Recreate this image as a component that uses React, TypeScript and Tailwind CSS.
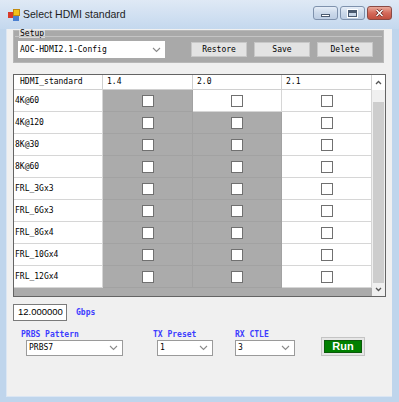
import React from 'react'

const rows = ['4K@60', '4K@120', '8K@30', '8K@60', 'FRL_3Gx3', 'FRL_6Gx3', 'FRL_8Gx4', 'FRL_10Gx4', 'FRL_12Gx4']

// which cells are editable (white) per column
const enabled14 = [false, false, false, false, false, false, false, false, false]
const enabled20 = [true, false, false, false, false, false, false, false, false]
const enabled21 = [true, true, true, true, true, true, true, true, true]

function Chevron() {
  return (
    <svg width="9" height="6" viewBox="0 0 9 6">
      <polyline points="1,1 4.5,4.5 8,1" fill="none" stroke="#8a8a8a" strokeWidth="1.1" />
    </svg>
  )
}

function Check() {
  return <div className="w-[12px] h-[12px] border border-[#707070] bg-white" />
}

function Cell({ on }: { on: boolean }) {
  return (
    <div
      className={
        on
          ? 'h-[22px] flex items-center justify-center bg-white border-r border-b border-[#d6d6d6]'
          : 'h-[22px] flex items-center justify-center bg-[#ababab] border-r border-b border-[#a2a2a2]'
      }
    >
      <Check />
    </div>
  )
}

function Combo({ text, w, bordered = true }: { text: string; w: string; bordered?: boolean }) {
  return (
    <div
      className={
        'h-[16px] bg-white flex items-center justify-between pl-[2px] pr-[4px] ' +
        w +
        (bordered ? ' border border-[#9a9a9a]' : '')
      }
    >
      <span className="text-[8px] leading-none text-black">{text}</span>
      <Chevron />
    </div>
  )
}

function Btn({ label }: { label: string }) {
  return (
    <div className="w-[56px] h-[15px] bg-[#e3e3e3] border border-[#c8c8c8] flex items-center justify-center text-[8px] text-black">
      {label}
    </div>
  )
}

function CaptionBtn({ kind }: { kind: 'min' | 'max' | 'close' }) {
  if (kind === 'close') {
    return (
      <div className="w-[25px] h-[14px] rounded-[3px] border border-[#8a4a44] bg-gradient-to-b from-[#e9a99b] via-[#d46a5a] to-[#c2503f] flex items-center justify-center">
        <svg width="9" height="8" viewBox="0 0 9 8">
          <path d="M1.5 1 L7.5 7 M7.5 1 L1.5 7" stroke="#5a1c16" strokeWidth="2.6" />
          <path d="M1.5 1 L7.5 7 M7.5 1 L1.5 7" stroke="#ffffff" strokeWidth="1.5" />
        </svg>
      </div>
    )
  }
  return (
    <div className="w-[25px] h-[14px] rounded-[3px] border border-[#7f92ad] bg-gradient-to-b from-[#e6eef8] via-[#cbd9ea] to-[#bccde3] flex items-center justify-center">
      {kind === 'min' ? (
        <div className="w-[9px] h-[3px] mt-[5px] bg-white border border-[#4a5a70]" />
      ) : (
        <div className="w-[9px] h-[7px] bg-transparent border-[1px] border-t-[3px] border-[#4a5a70] outline outline-1 outline-white" />
      )}
    </div>
  )
}

export default function App() {
  return (
    <div className="w-[399px] h-[402px] bg-[#bfd5ec] flex flex-col font-['DejaVu_Sans_Mono',monospace] overflow-hidden">
      {/* title bar */}
      <div className="h-[29px] flex items-start bg-gradient-to-b from-[#dfe9f5] to-[#c4d8ee]">
        <div className="ml-[8px] mt-[9px] w-[12px] h-[12px] relative">
          <div className="absolute left-0 top-[3px] w-[6px] h-[6px] bg-[#d83a2a]" />
          <div className="absolute left-[5px] top-0 w-[7px] h-[7px] bg-[#f2c21b] border border-[#c08a10]" />
          <div className="absolute left-[5px] top-[7px] w-[6px] h-[5px] bg-[#4a7fd0]" />
        </div>
        <div className="ml-[3px] mt-[7px] text-[10.5px] leading-[14px] text-[#1e1e1e] font-['Liberation_Sans',sans-serif]">
          Select HDMI standard
        </div>
        <div className="ml-auto mr-[7px] mt-[6px] flex gap-[2px]">
          <CaptionBtn kind="min" />
          <CaptionBtn kind="max" />
          <CaptionBtn kind="close" />
        </div>
      </div>

      {/* client */}
      <div className="ml-[6px] mr-[7px] h-[368px] bg-[#f0f0f0] border-l border-b border-[#dbe6f3] px-[6px] pt-[1px] flex flex-col">
        {/* Setup group */}
        <div className="relative h-[33px] w-[371px] bg-[#a9a9a9] border border-[#b8b8b8]">
          <div className="absolute left-[5px] top-[-1px] h-[8px] px-[1px] bg-[#d9d9d9] text-[8px] leading-[8px] text-black">
            Setup
          </div>
          <div className="absolute left-[1px] right-[1px] top-[5px] h-px bg-[#c4c4c4]" />
          <div className="flex items-center pt-[10px] pl-[4px]">
            <Combo text="AOC-HDMI2.1-Config" w="w-[147px] h-[17px]" bordered={false} />
            <div className="ml-[26px] flex gap-[7px]">
              <Btn label="Restore" />
              <Btn label="Save" />
              <Btn label="Delete" />
            </div>
          </div>
        </div>

        {/* grid */}
        <div className="mt-[11px] w-[373px] h-[223px] border border-[#646464] bg-[#ababab] flex">
          <div className="w-[358px] flex flex-col">
            <div className="grid grid-cols-[89px_90px_89px_90px] h-[15px] bg-white">
              {['HDMI_standard', '1.4', '2.0', '2.1'].map((h, i) => (
                <div
                  key={h}
                  className={
                    'h-[15px] flex items-center text-[8px] text-black border-r border-b border-[#d0d0d0] ' +
                    (i === 0 ? 'pl-[6px]' : 'pl-[4px]')
                  }
                >
                  {h}
                </div>
              ))}
            </div>
            {rows.map((r, i) => (
              <div key={r} className="grid grid-cols-[89px_90px_89px_90px]">
                <div className="h-[22px] flex items-center pl-[1px] bg-white border-r border-b border-[#d6d6d6] text-[8px] text-black">
                  {r}
                </div>
                <Cell on={enabled14[i]} />
                <Cell on={enabled20[i]} />
                <Cell on={enabled21[i]} />
              </div>
            ))}
          </div>
          {/* scrollbar */}
          <div className="w-[13px] flex flex-col bg-[#f0f0f0]">
            <div className="h-[15px] flex items-center justify-center bg-white">
              <svg width="7" height="5" viewBox="0 0 7 5">
                <polyline points="1,4 3.5,1.5 6,4" fill="none" stroke="#555" strokeWidth="1.3" />
              </svg>
            </div>
            <div className="h-[12px]" />
            <div className="flex-1 mx-[1px] bg-[#cdcdcd]" />
            <div className="h-[13px] flex items-center justify-center">
              <svg width="7" height="5" viewBox="0 0 7 5">
                <polyline points="1,1 3.5,3.5 6,1" fill="none" stroke="#555" strokeWidth="1.3" />
              </svg>
            </div>
          </div>
        </div>

        {/* rate */}
        <div className="mt-[7px] flex items-center">
          <div className="w-[54px] h-[17px] bg-white border border-[#7a7a7a] flex items-center pl-[4px] text-[9.5px] text-black font-['Liberation_Sans',sans-serif]">
            12.000000
          </div>
          <div className="ml-[9px] text-[8px] font-bold text-[#3d3dff]">Gbps</div>
        </div>

        {/* bottom controls */}
        <div className="mt-[10px] flex items-end">
          <div className="ml-[8px] w-[102px] flex flex-col">
            <div className="h-[9px] text-[8px] leading-[8px] font-bold text-[#3d3dff]">PRBS Pattern</div>
            <div className="ml-[5px]">
              <Combo text="PRBS7" w="w-[97px]" />
            </div>
          </div>
          <div className="ml-[30px] flex flex-col">
            <div className="h-[9px] text-[8px] leading-[8px] font-bold text-[#3d3dff]">TX Preset</div>
            <div className="ml-[4px]">
              <Combo text="1" w="w-[56px]" />
            </div>
          </div>
          <div className="ml-[22px] flex flex-col">
            <div className="h-[9px] text-[8px] leading-[8px] font-bold text-[#3d3dff]">RX CTLE</div>
            <Combo text="3" w="w-[60px]" />
          </div>
          <div className="ml-[26px] w-[44px] h-[19px] border border-[#c4c4c4] bg-[#e6e6e6] p-[2px]">
            <div className="w-full h-full bg-[#008000] border border-[#0a5a0a] flex items-center justify-center text-white font-bold text-[11px] leading-none font-['Liberation_Sans',sans-serif]">
              Run
            </div>
          </div>
        </div>
      </div>
    </div>
  )
}
